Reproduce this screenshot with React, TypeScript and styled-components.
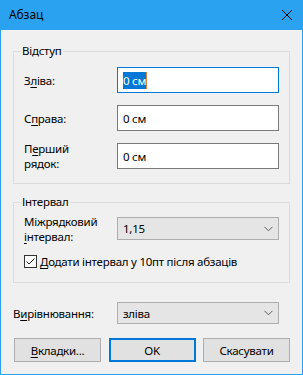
import React from "react";
import styled, { createGlobalStyle } from "styled-components";

const GlobalStyle = createGlobalStyle`
  body {
    margin: 0;
    font-family: "Noto Sans", "Open Sans", sans-serif;
    font-size: 11.5px;
    letter-spacing: -0.25px;
    color: #000;
  }
`;

const Window = styled.div`
  width: 303px;
  height: 375px;
  box-sizing: border-box;
  border: 1px solid #2ba2f0;
  border-top: 0;
  background: #f0f0f0;
  display: flex;
  flex-direction: column;
`;

const TitleBar = styled.div`
  height: 30px;
  flex-shrink: 0;
  background: #2ba2f0;
  display: flex;
  align-items: center;
  justify-content: space-between;
  padding-left: 9px;
  margin: 0 -1px;
`;

const Title = styled.span`
  font-size: 12px;
  line-height: 16px;
  letter-spacing: -0.1px;
`;

const CloseBox = styled.div`
  width: 30px;
  height: 30px;
  display: flex;
  align-items: center;
  justify-content: center;
  margin-right: 1px;
`;

const Body = styled.div`
  padding: 13px 12px 0 12px;
  display: flex;
  flex-direction: column;
`;

const Group = styled.fieldset<{ $gap?: number }>`
  margin: 0;
  margin-top: ${(p) => p.$gap ?? 0}px;
  padding: 0;
  border: 1px solid #dcdcdc;
  min-width: 0;
`;

const Legend = styled.legend`
  margin-left: 7px;
  padding: 0 1px;
  line-height: 16px;
`;

const GroupInner = styled.div<{ $top: number; $bottom: number }>`
  padding: ${(p) => p.$top}px 10px ${(p) => p.$bottom}px 10px;
  display: flex;
  flex-direction: column;
  gap: 12px;
`;

const Row = styled.div<{ $label?: number; $h: number }>`
  display: grid;
  grid-template-columns: ${(p) => p.$label ?? 93}px 162px;
  grid-template-rows: ${(p) => p.$h}px;
  align-items: center;
`;

const Label = styled.div`
  line-height: 15px;
`;

const Key = styled.span`
  text-decoration: underline;
  text-underline-offset: 2px;
  text-decoration-thickness: 1px;
`;

const TextBox = styled.div<{ $focused?: boolean }>`
  height: 26px;
  box-sizing: border-box;
  border: 1px solid ${(p) => (p.$focused ? "#0078d7" : "#7a7a7a")};
  background: #fff;
  display: flex;
  align-items: center;
  padding: 0 5px;
`;

const Selected = styled.span`
  background: #0078d7;
  color: #fff;
  line-height: 17px;
`;

const Caret = styled.span`
  width: 1px;
  height: 17px;
  background: #d9823b;
`;

const Select = styled.div<{ $h: number }>`
  height: ${(p) => p.$h}px;
  box-sizing: border-box;
  border: 1px solid #adadad;
  background: #e5e5e5;
  display: flex;
  align-items: center;
  justify-content: space-between;
  padding: 0 5px 0 5px;
`;

const CheckRow = styled.label`
  display: flex;
  align-items: center;
  gap: 3px;
  height: 16px;
  margin-top: 1px;
`;

const CheckBox = styled.span`
  width: 13px;
  height: 13px;
  box-sizing: border-box;
  border: 1px solid #333;
  background: #fff;
  display: flex;
  align-items: center;
  justify-content: center;
`;

const AlignRow = styled(Row)`
  margin-top: 19px;
`;

const Buttons = styled.div`
  margin-top: 14px;
  padding-left: 1px;
  display: flex;
  justify-content: space-between;
`;

const Button = styled.div<{ $primary?: boolean }>`
  width: 87px;
  height: 24px;
  box-sizing: border-box;
  border: ${(p) => (p.$primary ? "2px solid #0078d7" : "1px solid #adadad")};
  background: #e1e1e1;
  display: flex;
  align-items: center;
  justify-content: center;
`;

const Chevron = () => (
  <svg width="9" height="6" viewBox="0 0 9 6">
    <path d="M0.5 0.8 L4.5 4.8 L8.5 0.8" fill="none" stroke="#5a5a5a" strokeWidth="1" />
  </svg>
);

export default function App() {
  return (
    <>
      <GlobalStyle />
      <Window>
        <TitleBar>
          <Title>Абзац</Title>
          <CloseBox>
            <svg width="10" height="10" viewBox="0 0 10 10">
              <path d="M0 0 L10 10 M10 0 L0 10" stroke="#000" strokeWidth="1" />
            </svg>
          </CloseBox>
        </TitleBar>
        <Body>
          <Group>
            <Legend>Відступ</Legend>
            <GroupInner $top={8} $bottom={14}>
              <Row $h={26}>
                <Label>
                  З<Key>л</Key>іва:
                </Label>
                <TextBox $focused>
                  <Selected>0 см</Selected>
                  <Caret />
                </TextBox>
              </Row>
              <Row $h={26}>
                <Label>
                  С<Key>п</Key>рава:
                </Label>
                <TextBox>0 см</TextBox>
              </Row>
              <Row $h={26}>
                <Label>
                  П<Key>е</Key>рший
                  <br />
                  рядок:
                </Label>
                <TextBox>0 см</TextBox>
              </Row>
            </GroupInner>
          </Group>
          <Group $gap={10}>
            <Legend>Інтервал</Legend>
            <GroupInner $top={7} $bottom={13}>
              <Row $h={23}>
                <Label>
                  Міжрядковий
                  <br />
                  <Key>і</Key>нтервал:
                </Label>
                <Select $h={23}>
                  <span>1,15</span>
                  <Chevron />
                </Select>
              </Row>
              <CheckRow>
                <CheckBox>
                  <svg width="11" height="11" viewBox="0 0 11 11">
                    <path d="M1.5 5.5 L4 8 L9.5 2.5" fill="none" stroke="#222" strokeWidth="1" />
                  </svg>
                </CheckBox>
                <span>
                  <Key>Д</Key>одати інтервал у 10пт після абзаців
                </span>
              </CheckRow>
            </GroupInner>
          </Group>
          <AlignRow $label={104} $h={22}>
            <Label>
              В<Key>и</Key>рівнювання:
            </Label>
            <Select $h={22}>
              <span>зліва</span>
              <Chevron />
            </Select>
          </AlignRow>
          <Buttons>
            <Button>
              <span>
                <Key>В</Key>кладки...
              </span>
            </Button>
            <Button $primary>OK</Button>
            <Button>Скасувати</Button>
          </Buttons>
        </Body>
      </Window>
    </>
  );
}
